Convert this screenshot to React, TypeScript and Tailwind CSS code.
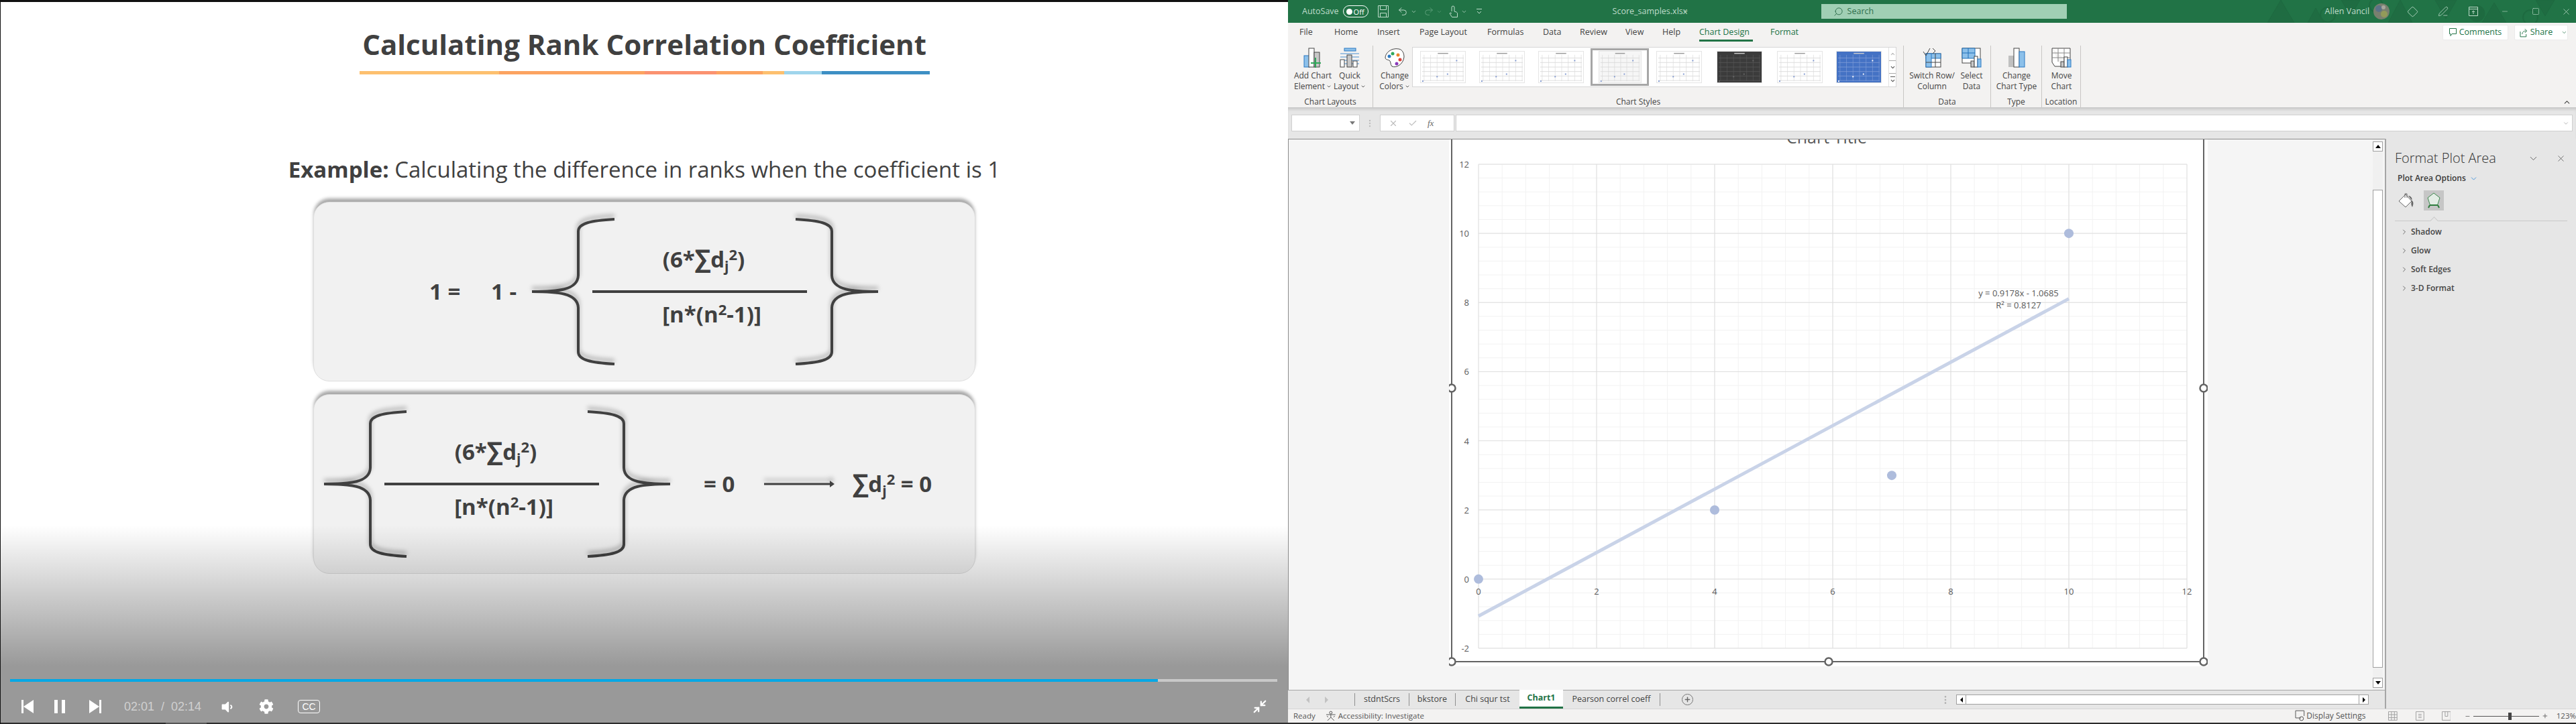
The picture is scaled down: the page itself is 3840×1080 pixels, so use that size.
import React from "react";
import { Check, ChevronDown, ChevronRight, ChevronUp, Diamond, Minimize2, Minus, MoreVertical, PenLine, Plus, Search, Square, Undo2, Redo2, X } from "lucide-react";
import { FaCog, FaVolumeDown } from "react-icons/fa";

const sans = "font-['Open_Sans',sans-serif]";

function Brace({ side, h }: { side: "left" | "right"; h: number }) {
    const m = h / 2;
    const d = `M2 ${m} C 40 ${m} 70 ${m - 2} 71 ${m - 24} L 71 22 C 71 10 90 6 125 4 M2 ${m} C 40 ${m} 70 ${m + 2} 71 ${m + 24} L 71 ${h - 22} C 71 ${h - 10} 90 ${h - 6} 125 ${h - 4}`;
    return (
        <svg width="126" height={h} viewBox={`0 0 126 ${h}`} className={`shrink-0 drop-shadow-[0_-5px_3px_rgba(0,0,0,0.3)] ${side === "right" ? "-scale-x-100" : ""}`}>
            <path d={d} fill="none" stroke="#404040" strokeWidth="4" />
        </svg>
    );
}

function Dj() {
    return (
        <>
            <span className="text-[37px] leading-none">∑</span>d<sub className="text-[21px]">j</sub><sup className="text-[22px]">2</sup>
        </>
    );
}

function Fraction() {
    return (
        <div className="relative z-10 flex flex-col w-[320px] shrink-0 ml-[-34px] mr-[-18px]">
            <div className="h-[96px] pt-[4px] pl-[12px] flex items-center justify-center text-[33px] font-bold">
                <span className="whitespace-nowrap">(6*<Dj />)</span>
            </div>
            <div className="h-[4px] bg-[#404040]" />
            <div className="h-[96px] pb-[32px] pl-[36px] flex items-center justify-center text-[33px] font-bold">
                <span className="whitespace-nowrap">[n*(n<sup className="text-[22px]">2</sup>-1)]</span>
            </div>
        </div>
    );
}

function Card({ children, pl }: { children: React.ReactNode; pl: string }) {
    return (
        <div className={`w-[987px] h-[268px] rounded-[24px] bg-[#f1f1f1] border border-[#dedede] shadow-[0_-6px_5px_-1px_rgba(0,0,0,0.35)] flex items-center text-[#404040] ${pl}`}>
            {children}
        </div>
    );
}

function VideoPane() {
    return (
        <div className={`relative w-[1920px] h-full bg-white border-l border-[#111] border-t-[3px] border-t-[#111] flex flex-col items-center overflow-hidden ${sans}`}>
            <h1 className="mt-[35px] text-[42px] leading-[56px] font-bold text-[#404040] whitespace-nowrap">Calculating Rank Correlation Coefficient</h1>
            <div className="mt-[12px] w-[850px] h-[5px] flex">
                <div className="w-[208px] bg-[#fdc06f]" />
                <div className="w-[217px] bg-[#fca361]" />
                <div className="w-[107px] bg-[#fb9270]" />
                <div className="w-[69px] bg-[#fca361]" />
                <div className="w-[32px] bg-[#fdc06f]" />
                <div className="w-[56px] bg-[#9fd5ec]" />
                <div className="flex-1 bg-[#3d8fc4]" />
            </div>
            <p className="mt-[119px] text-[33px] leading-[46px] text-[#404040] whitespace-nowrap">
                <b>Example:</b> Calculating the difference in ranks when the coefficient is 1
            </p>
            <div className="mt-[25px]">
                <Card pl="pl-[172px]">
                    <span className="text-[33px] font-bold w-[92px]">1 =</span>
                    <span className="text-[33px] font-bold w-[59px]">1 -</span>
                    <Brace side="left" h={224} />
                    <Fraction />
                    <Brace side="right" h={224} />
                </Card>
            </div>
            <div className="mt-[19px]">
                <Card pl="pl-[13px]">
                    <Brace side="left" h={224} />
                    <Fraction />
                    <Brace side="right" h={224} />
                    <span className="ml-[48px] text-[33px] font-bold w-[90px]">= 0</span>
                    <svg width="106" height="14" viewBox="0 0 106 14" className="shrink-0 drop-shadow-[0_-6px_3px_rgba(0,0,0,0.25)]">
                        <path d="M0 7h100" stroke="#404040" strokeWidth="3" />
                        <path d="M98 2l7 5-7 5z" fill="#404040" />
                    </svg>
                    <span className="ml-[26px] text-[33px] font-bold whitespace-nowrap"><Dj /> = 0</span>
                </Card>
            </div>

            <div className="absolute left-0 right-0 top-[780px] bottom-0 flex flex-col">
                <div className="h-[210px] bg-gradient-to-b from-transparent to-black/40" />
                <div className="flex-1 bg-black/40 flex flex-col">
                    <div className="mt-[20px] mx-[14px] w-[1889px] h-[4px] flex bg-[#c9c9c9]">
                        <div className="w-[1711px] bg-[#00a8e6]" />
                    </div>
                    <div className="mt-[26px] h-[22px] flex items-center pl-[31px] text-white">
                        <svg width="18" height="20" viewBox="0 0 18 20" className="shrink-0"><path d="M0 0h3v20H0zM3 10L18 0v20z" fill="white" /></svg>
                        <div className="ml-[31px] w-[5px] h-[20px] bg-white" />
                        <div className="ml-[6px] w-[5px] h-[20px] bg-white" />
                        <svg width="18" height="20" viewBox="0 0 18 20" className="ml-[36px] shrink-0"><path d="M15 0h3v20h-3zM15 10L0 0v20z" fill="white" /></svg>
                        <span className="ml-[34px] w-[112px] font-['Liberation_Sans',sans-serif] text-[18px] text-[#d0d0d0] whitespace-pre">02:01  /  02:14</span>
                        <FaVolumeDown className="ml-[31px] text-[21px]" />
                        <FaCog className="ml-[37px] text-[22px]" />
                        <span className="ml-[36px] w-[33px] h-[20px] border border-white rounded-[4px] flex items-center justify-center text-[14px] font-['Liberation_Sans',sans-serif] leading-none">CC</span>
                        <Minimize2 className="ml-auto mr-[31px]" size={22} strokeWidth={2.5} />
                    </div>
                </div>
                <div className="h-[2px] bg-[#2c2c2c] flex shrink-0"><div className="ml-[246px] w-[61px] bg-[#555]" /></div>
            </div>
        </div>
    );
}

function TitleBar() {
    const muted = "text-[#bfdccb]";
    return (
        <div className={`relative h-[34px] bg-[#217346] flex items-center text-[12px] overflow-hidden ${muted}`}>
            <svg className="absolute right-0 top-0" width="460" height="34" viewBox="0 0 460 34">
                <g fill="#1e6a40" stroke="#1e6a40">
                    <path d="M20 0l20 34H0zM60 34l12-22 12 22zM110 0l14 24 14-24zM180 34l18-34 18 34zM250 0l16 28 16-28zM320 34l18-30 18 30zM400 0l14 24 14-24z" fill="#1f6c42" />
                    <circle cx="90" cy="22" r="11" fill="none" strokeWidth="2" />
                    <circle cx="162" cy="8" r="10" fill="none" strokeWidth="2" />
                    <circle cx="312" cy="20" r="12" />
                    <circle cx="392" cy="26" r="11" fill="none" strokeWidth="2" />
                </g>
            </svg>
            <span className="ml-[21px] text-[12.5px]">AutoSave</span>
            <div className="ml-[6px] w-[38px] h-[18px] border border-white rounded-full flex items-center pl-[4px] gap-[2px] text-white">
                <div className="w-[9px] h-[9px] rounded-full bg-white" />
                <span className="text-[11px] leading-none">Off</span>
            </div>
            <svg width="16" height="18" viewBox="0 0 16 18" fill="none" stroke="currentColor" className="ml-[14px]"><path d="M.5.5h15v17H.5zM3.500 .5v6h9v-6M3.500 17.500v-6h9v6" /></svg>
            <Undo2 size={16} strokeWidth={1.5} className="ml-[13px]" />
            <ChevronDown size={9} className="ml-[4px]" />
            <Redo2 size={16} strokeWidth={1.5} className="ml-[10px] text-[#5a9e78]" />
            <ChevronDown size={9} className="ml-[3px] text-[#5a9e78]" />
            <svg width="13" height="18" viewBox="0 0 13 18" fill="none" stroke="currentColor" className="ml-[10px]"><path d="M4 9V3a2 2 0 014 0v6l3 1c1 .5 1.500 1 1.500 2v5.500h-8L1 12l1-1 2 1" /></svg>
            <ChevronDown size={9} className="ml-[5px]" />
            <svg width="8" height="8" viewBox="0 0 8 8" fill="none" stroke="currentColor" className="ml-[14px]"><path d="M0 .5h8M1 4l3 3 3-3" /></svg>
            <span className="ml-[195px] w-[100px] text-[12.5px] whitespace-nowrap">Score_samples.xlsx</span>
            <ChevronDown size={11} className="ml-[3px]" />
            <div className="relative ml-[197px] w-[366px] h-[22px] bg-[#a0cfb4] flex items-center text-[#2f6e4c]">
                <Search size={15} strokeWidth={1.5} className="ml-[18px] -scale-x-100" />
                <span className="ml-[6px] text-[12.5px]">Search</span>
            </div>
            <span className="relative ml-[385px] w-[72px] text-[12.5px] whitespace-nowrap">Allen Vancil</span>
            <svg width="24" height="24" viewBox="0 0 24 24" className="relative shrink-0">
                <circle cx="12" cy="12" r="12" fill="#79806f" />
                <circle cx="8" cy="8" r="5" fill="#5d7287" />
                <circle cx="16" cy="16" r="5" fill="#939a59" />
                <circle cx="15" cy="6" r="3" fill="#a6a79c" />
            </svg>
            <Diamond size={17} strokeWidth={1.2} className="relative ml-[26px]" />
            <PenLine size={16} strokeWidth={1.2} className="relative ml-[29px]" />
            <svg width="14" height="14" viewBox="0 0 14 14" fill="none" stroke="currentColor" className="relative ml-[30px]"><path d="M.5.5h13v13H.5zM.5 3.500h13M7 11V6M5 8l2-2 2 2" /></svg>
            <Minus size={12} strokeWidth={1.2} className="relative ml-[34px]" />
            <Square size={12} strokeWidth={1.2} className="relative ml-[34px]" />
            <X size={15} strokeWidth={1.2} className="relative ml-[32px]" />
        </div>
    );
}

function RibbonTabs() {
    const tab = "text-[12.5px] leading-[28px] whitespace-nowrap";
    return (
        <div className="h-[28px] flex items-start pl-[17px] text-[#444] relative">
            <span className={`w-[52px] ${tab}`}>File</span>
            <span className={`w-[64px] ${tab}`}>Home</span>
            <span className={`w-[63px] ${tab}`}>Insert</span>
            <span className={`w-[101px] ${tab}`}>Page Layout</span>
            <span className={`w-[83px] ${tab}`}>Formulas</span>
            <span className={`w-[55px] ${tab}`}>Data</span>
            <span className={`w-[68px] ${tab}`}>Review</span>
            <span className={`w-[55px] ${tab}`}>View</span>
            <span className={`w-[55px] ${tab}`}>Help</span>
            <span className={`w-[106px] ${tab} text-[#217346]`}>
                <span className="inline-block border-b-[3px] border-[#217346] h-[28px] w-[80px]">Chart Design</span>
            </span>
            <span className={`${tab} text-[#217346]`}>Format</span>
            <div className="ml-auto mr-[12px] mt-[3px] flex gap-[9px] text-[#217346]">
                <div className="w-[98px] h-[23px] bg-white rounded-[2px] border border-[#ebebeb] flex items-center justify-center gap-[4px] text-[12.5px]">
                    <svg width="11" height="13" viewBox="0 0 11 13" fill="none" stroke="currentColor"><path d="M.5.5h10v8H4l-2 3v-3H.5z" /></svg>
                    Comments
                </div>
                <div className="w-[80px] h-[23px] bg-white rounded-[2px] border border-[#ebebeb] flex items-center pl-[7px] gap-[4px] text-[12.5px]">
                    <svg width="12" height="14" viewBox="0 0 12 14" fill="none" stroke="currentColor"><path d="M1 5v8h9V9M4 9c0-4 3-5 6-5M8 1l3 3-3 3" /></svg>
                    Share
                    <ChevronDown size={9} className="ml-[9px]" />
                </div>
            </div>
        </div>
    );
}

function RibbonBtn({ w, icon, one, two, caret }: { w: string; icon: React.ReactNode; one: string; two: string; caret?: boolean }) {
    return (
        <div className={`${w} shrink-0 flex flex-col items-center text-[12px] leading-[16px] text-[#444] whitespace-nowrap`}>
            <div className="h-[31px] flex items-end justify-center mt-[8px]">{icon}</div>
            <span className="mt-[4px]">{one}</span>
            <span className="flex items-center">
                {two}
                {caret && <ChevronDown size={8} strokeWidth={2.5} className="ml-[2px]" />}
            </span>
        </div>
    );
}

function Thumb({ variant = "white", w = "w-[68px]", ml }: { variant?: "white" | "dark" | "blue" | "soft"; w?: string; ml?: string }) {
    const bg = variant === "dark" ? "#3b3b3b" : variant === "blue" ? "#4472c4" : variant === "soft" ? "#f6f6f6" : "#ffffff";
    const grid = variant === "dark" ? "#555555" : variant === "blue" ? "#7d9bd6" : "#d9d9d9";
    const dot = variant === "blue" ? "#ffffff" : variant === "dark" ? "#666" : "#7f97cf";
    const ys = [10, 17, 24, 31, 38, 45];
    const xs = [5, 15, 25, 35, 45, 55, 65];
    return (
        <svg viewBox="0 0 68 48" preserveAspectRatio="none" className={`h-[48px] ${w} ${ml ?? ""} shrink-0 border border-[#e5e5e5]`}>
            <rect width="68" height="48" fill={bg} />
            <rect x="26" y="2" width="16" height="1.500" fill={variant === "dark" || variant === "blue" ? "#ccc" : "#999"} />
            {ys.map((y) => <path key={y} d={`M2 ${y}H66`} stroke={grid} strokeWidth="0.9" />)}
            {xs.map((x) => <path key={x} d={`M${x} 5V46`} stroke={grid} strokeWidth="0.7" />)}
            <rect x="2" y="45" width="2" height="2" fill={dot} />
            <rect x="24" y="38" width="2" height="2" fill={dot} />
            <rect x="40" y="34" width="2" height="2" fill={dot} />
            <rect x="54" y="13" width="2" height="2" fill={dot} />
        </svg>
    );
}

function GroupLabel({ children }: { children: string }) {
    return <div className="mt-auto text-center text-[12px] leading-[16px] text-[#444]">{children}</div>;
}

const blue = "#8cc0ea";
const ink = "#444444";

function Ribbon() {
    return (
        <div className="h-[98px] flex items-stretch">
            <div className="w-[127px] flex flex-col border-r border-[#c8c6c4] mt-[6px]">
                <div className="flex pl-[5px] -mt-[6px]">
                    <RibbonBtn w="w-[64px]" one="Add Chart" two="Element" caret icon={
                        <svg width="30" height="30" viewBox="0 0 30 30"><rect x="2" y="12" width="8" height="17" fill={blue} stroke="#2b79c2" /><rect x="9" y="1" width="8" height="28" fill="#fff" stroke={ink} /><rect x="17" y="7" width="8" height="22" fill="#c8c8c8" stroke={ink} /><path d="M12 23h15M19 15v15" stroke="#2fa85a" strokeWidth="2" /></svg>
                    } />
                    <RibbonBtn w="w-[46px]" one="Quick" two="Layout" caret icon={
                        <svg width="30" height="30" viewBox="0 0 30 30"><rect x="7" y="1" width="17" height="4" fill={blue} stroke="#2b79c2" /><path d="M1 9h28M1 14h28M1 19h28M1 24h28" stroke="#4a90d0" /><rect x="1" y="18" width="6" height="11" fill="#fff" stroke={ink} /><rect x="11" y="11" width="7" height="18" fill="#c8c8c8" stroke={ink} /><rect x="20" y="20" width="6" height="9" fill="#fff" stroke={ink} /></svg>
                    } />
                </div>
                <GroupLabel>Chart Layouts</GroupLabel>
            </div>
            <div className="w-[791px] flex flex-col border-r border-[#c8c6c4] mt-[6px]">
                <div className="flex -mt-[6px] pl-[7px]">
                    <RibbonBtn w="w-[50px]" one="Change" two="Colors" caret icon={
                        <svg width="30" height="30" viewBox="0 0 30 30"><path d="M21 2C10 0 1 8 1 15c0 3 4 3 6 4 3 2 1 6 4 9 6 3 17-3 18-14C29 9 27 3 21 2z" fill="#fff" stroke={ink} /><circle cx="12" cy="9" r="2.500" fill="#2fa85a" /><circle cx="7" cy="13" r="2.500" fill="#2b79c2" /><circle cx="20" cy="11" r="2.500" fill="#e8862e" /><circle cx="23" cy="18" r="2.500" fill="#d8443c" /><circle cx="18" cy="24" r="2.500" fill="#8a3ab9" /></svg>
                    } />
                    <div className="ml-[1px] mt-[8px] w-[722px] h-[60px] bg-white border border-[#d6d6d6] flex items-center pl-[11px]">
                        <Thumb />
                        <Thumb ml="ml-[20px]" />
                        <Thumb ml="ml-[20px]" />
                        <div className="ml-[10px] w-[87px] h-[56px] border-[3px] border-[#a6a6a6] flex items-center justify-center shrink-0"><Thumb w="w-[64px]" variant="soft" /></div>
                        <Thumb ml="ml-[11px]" />
                        <Thumb ml="ml-[22px]" variant="dark" />
                        <Thumb ml="ml-[22px]" />
                        <Thumb ml="ml-[20px]" variant="blue" />
                        <div className="ml-[10px] w-[15px] h-full flex flex-col text-[#555] border-l border-[#e1e1e1]">
                            <div className="h-[20px] flex items-center justify-center text-[#bbb] border-b border-[#aaa]"><ChevronUp size={9} strokeWidth={3} /></div>
                            <div className="h-[19px] flex items-center justify-center border-b border-[#aaa]"><ChevronDown size={9} strokeWidth={3} /></div>
                            <div className="flex-1 flex flex-col items-center justify-center"><div className="w-[7px] h-px bg-[#555] mb-[1px]" /><ChevronDown size={9} strokeWidth={3} /></div>
                        </div>
                    </div>
                </div>
                <GroupLabel>Chart Styles</GroupLabel>
            </div>
            <div className="w-[130px] flex flex-col border-r border-[#c8c6c4] mt-[6px]">
                <div className="flex -mt-[6px]">
                    <RibbonBtn w="w-[84px]" one="Switch Row/" two="Column" icon={
                        <svg width="30" height="30" viewBox="0 0 30 30"><rect x="6" y="9" width="22" height="20" fill="#fff" stroke={ink} /><rect x="6" y="9" width="22" height="7" fill={blue} stroke="#2b79c2" /><rect x="6" y="9" width="8" height="20" fill={blue} stroke="#2b79c2" /><path d="M6 22h22M20 9v20" stroke={ink} /><path d="M2 6l4 6 6-11M16 1l4 4-4 4" stroke={ink} fill="none" /></svg>
                    } />
                    <RibbonBtn w="w-[34px]" one="Select" two="Data" icon={
                        <svg width="30" height="30" viewBox="0 0 30 30"><rect x="1" y="1" width="27" height="22" fill="#fff" stroke={ink} /><path d="M1 1h19v15H1z" fill={blue} stroke="#1f6fb8" /><path d="M10 1v15M1 8h19" stroke="#1f6fb8" /><rect x="14" y="20" width="5" height="9" fill="#c8c8c8" stroke={ink} /><rect x="19" y="13" width="5" height="16" fill="#fff" stroke={ink} /><rect x="24" y="17" width="5" height="12" fill={blue} stroke="#2b79c2" /></svg>
                    } />
                </div>
                <GroupLabel>Data</GroupLabel>
            </div>
            <div className="w-[76px] flex flex-col border-r border-[#c8c6c4] mt-[6px]">
                <div className="flex -mt-[6px]">
                    <RibbonBtn w="w-[76px]" one="Change" two="Chart Type" icon={
                        <svg width="26" height="30" viewBox="0 0 26 30"><rect x="1" y="12" width="8" height="17" fill="#c0c0c0" /><rect x="9" y="1" width="8" height="28" fill="#fff" stroke={ink} /><rect x="17" y="6" width="8" height="23" fill={blue} stroke="#2b79c2" /></svg>
                    } />
                </div>
                <GroupLabel>Type</GroupLabel>
            </div>
            <div className="w-[58px] flex flex-col border-r border-[#c8c6c4] mt-[6px]">
                <div className="flex -mt-[6px]">
                    <RibbonBtn w="w-[58px]" one="Move" two="Chart" icon={
                        <svg width="30" height="30" viewBox="0 0 30 30"><path d="M1 1h27v20h-4M1 1v21l4 6h9" fill="#fff" stroke={ink} /><path d="M1 8h27M1 15h27M10 1v20M19 1v20" stroke="#888" /><rect x="14" y="21" width="5" height="8" fill="#c8c8c8" stroke={ink} /><rect x="19" y="14" width="5" height="15" fill="#fff" stroke={ink} /><rect x="24" y="18" width="5" height="11" fill={blue} stroke="#2b79c2" /></svg>
                    } />
                </div>
                <GroupLabel>Location</GroupLabel>
            </div>
            <div className="flex-1 flex justify-end items-end pr-[7px]"><ChevronUp size={13} className="text-[#444] mb-[1px]" /></div>
        </div>
    );
}

function FormulaBar() {
    return (
        <div className="h-[47px] bg-[#e6e6e6] flex items-start pt-[11px] pl-[5px] text-[#8a8a8a] shadow-[inset_0_5px_4px_-2px_rgba(0,0,0,0.14)]">
            <div className="w-[102px] h-[25px] bg-white border border-[#d0d0d0] flex items-center justify-end pr-[6px]"><div className="w-0 h-0 border-x-[4px] border-x-transparent border-t-[5px] border-t-[#777]" /></div>
            <div className="w-[30px] h-[25px] flex items-center justify-center"><MoreVertical size={14} className="text-[#bbb]" /></div>
            <div className="w-[111px] h-[25px] bg-white border border-[#d0d0d0] flex items-center pl-[12px] gap-[15px] text-[#bdbdbd]">
                <X size={14} />
                <Check size={14} />
                <span className="font-['Liberation_Serif',serif] italic text-[13px] text-[#666]">fx</span>
            </div>
            <div className="ml-[2px] w-[1665px] h-[25px] bg-white border border-[#d0d0d0] flex items-center justify-end pr-[4px]"><ChevronDown size={10} className="text-[#aaa]" /></div>
        </div>
    );
}

function ChartSheet() {
    const X0 = 44;
    const Y0 = 37;
    const ux = 88;
    const uy = 51.57;
    const px = (v: number) => X0 + v * ux;
    const py = (v: number) => Y0 + (12 - v) * uy;
    const vMinor = Array.from({ length: 31 }, (_, i) => i * 0.4);
    const hMinor = Array.from({ length: 36 }, (_, i) => -2 + i * 0.4);
    const xTicks = [0, 2, 4, 6, 8, 10, 12];
    const yTicks = [12, 10, 8, 6, 4, 2, 0, -2];
    const handles = [[4, 371], [1125, 371], [4, 779], [566, 779], [1125, 779]];
    return (
        <svg width="1131" height="786" viewBox="0 0 1131 786" className="shrink-0 block font-['Open_Sans',sans-serif]">
            <rect width="1131" height="786" fill="#fff" />
            <text x="563" y="6" textAnchor="middle" fontSize="25" fill="#595959">Chart Title</text>
            {vMinor.map((v) => <path key={v} d={`M${px(v)} ${Y0}V${py(-2)}`} stroke="#f2f2f2" strokeWidth="1" />)}
            {hMinor.map((v) => <path key={v} d={`M${X0} ${py(v)}H${px(12)}`} stroke="#f2f2f2" strokeWidth="1" />)}
            {xTicks.map((v) => <path key={v} d={`M${px(v)} ${Y0}V${py(-2)}`} stroke="#dedede" strokeWidth="1" />)}
            {yTicks.map((v) => <path key={v} d={`M${X0} ${py(v)}H${px(12)}`} stroke="#dedede" strokeWidth="1" />)}
            <path d={`M${px(0)} ${py(-1.0685)}L${px(10)} ${py(8.11)}`} stroke="#c9d3e8" strokeWidth="5" />
            {[[0, 0], [4, 2], [7, 3], [10, 10]].map(([a, b]) => <circle key={a} cx={px(a)} cy={py(b)} r="7" fill="#aebcdc" />)}
            {yTicks.map((v) => <text key={v} x="30" y={py(v) + 5} textAnchor="end" fontSize="13" fill="#595959">{v}</text>)}
            {xTicks.map((v) => <text key={v} x={px(v)} y={py(0) + 23} textAnchor="middle" fontSize="13" fill="#595959">{v}</text>)}
            <text x="849" y="234" textAnchor="middle" fontSize="13" fill="#595959">y = 0.9178x - 1.0685</text>
            <text x="849" y="252" textAnchor="middle" fontSize="13" fill="#595959">R² = 0.8127</text>
            <path d="M4 0V779H1125V0" fill="none" stroke="#636363" strokeWidth="2" />
            {handles.map(([x, y]) => <circle key={`${x}-${y}`} cx={x} cy={y} r="5.500" fill="#fff" stroke="#636363" strokeWidth="2.500" />)}
        </svg>
    );
}

function VScroll() {
    const btn = "h-[15px] bg-white border border-[#a0a0a0] flex items-center justify-center shrink-0";
    return (
        <div className="w-[15px] h-full pt-[3px] pb-[3px] flex flex-col bg-[#f0f0f0] shrink-0">
            <div className={btn}><div className="w-0 h-0 border-x-[4px] border-x-transparent border-b-[5px] border-b-black" /></div>
            <div className="mt-[57px] h-[714px] bg-white border border-[#a0a0a0]" />
            <div className={`mt-[15px] ${btn}`}><div className="w-0 h-0 border-x-[4px] border-x-transparent border-t-[5px] border-t-black" /></div>
        </div>
    );
}

function SheetTabs() {
    const t = "h-[19px] flex items-center justify-center border-r border-[#8f8f8f] text-[12.5px] text-[#444] whitespace-nowrap";
    return (
        <div className="h-[28px] bg-[#e6e6e6] flex items-center border-t border-[#a6a6a6]">
            <div className="w-[100px] h-[19px] flex items-center border-r border-[#8f8f8f] pl-[27px] gap-[23px] text-[#c2c2c2]">
                <div className="w-0 h-0 border-y-[5px] border-y-transparent border-r-[5px] border-r-[#c2c2c2]" />
                <div className="w-0 h-0 border-y-[5px] border-y-transparent border-l-[5px] border-l-[#c2c2c2]" />
            </div>
            <div className={`w-[81px] ${t}`}>stdntScrs</div>
            <div className={`w-[69px] ${t}`}>bkstore</div>
            <div className={`w-[95px] ${t} border-r-0`}>Chi squr tst</div>
            <div className="w-[65px] h-[28px] -mt-[1px] bg-white border-b-[3px] border-[#217346] flex items-center justify-center text-[12.5px] font-bold text-[#217346]">Chart1</div>
            <div className={`w-[145px] ${t}`}>Pearson correl coeff</div>
            <div className="ml-[32px] w-[17px] h-[17px] rounded-full border border-[#777] flex items-center justify-center text-[#666]"><Plus size={11} strokeWidth={3} /></div>
            <MoreVertical size={16} className="ml-[368px] text-[#b0b0b0]" />
            <div className="ml-[8px] w-[615px] h-[15px] bg-white border border-[#a0a0a0] flex justify-between">
                <div className="w-[14px] border-r border-[#a0a0a0] flex items-center justify-center"><div className="w-0 h-0 border-y-[4px] border-y-transparent border-r-[4px] border-r-black" /></div>
                <div className="w-[14px] border-l border-[#a0a0a0] flex items-center justify-center"><div className="w-0 h-0 border-y-[4px] border-y-transparent border-l-[4px] border-l-black" /></div>
            </div>
        </div>
    );
}

function TaskPane() {
    const items = ["Shadow", "Glow", "Soft Edges", "3-D Format"];
    return (
        <div className="w-[285px] bg-[#e6e6e6] border-l-2 border-[#a6a6a6] pl-[13px] text-[#444] shrink-0">
            <div className="h-[46px] pt-[12px] flex items-center">
                <span className="text-[20px] leading-[28px] font-light text-[#333] whitespace-nowrap w-[198px]">Format Plot Area</span>
                <ChevronDown size={17} strokeWidth={1} className="text-[#333]" />
                <X size={15} strokeWidth={1} className="ml-[25px] text-[#333]" />
            </div>
            <div className="mt-[3px] flex items-center pl-[4px] text-[12px] font-semibold leading-[20px] text-[#3a3a3a]">
                Plot Area Options
                <ChevronDown size={13} strokeWidth={1.5} className="ml-[5px] text-[#2b88d8]" />
            </div>
            <div className="mt-[8px] flex items-center pl-[5px]">
                <svg width="24" height="24" viewBox="0 0 24 24" className="shrink-0">
                    <path d="M1 13L11 3l9 10-9 9z" fill="#fff" stroke="#666" />
                    <path d="M20 13c2-5-2-8-5-8l7 9c1 3 0 5-1 8-2-3-2-6-1-9z" fill="#666" />
                    <path d="M10 8V2h3v6" fill="none" stroke="#666" />
                </svg>
                <div className="ml-[14px] w-[30px] h-[30px] bg-[#c6c6c6] flex items-center justify-center">
                    <svg width="22" height="26" viewBox="0 0 22 26">
                        <path d="M11 2l9 7-3.500 11h-11L2 9z" fill="#e3ede5" stroke="#3f8a50" />
                        <path d="M5 20h12M5 20l-2 4M17 20l2 4" stroke="#2e7d3e" strokeWidth="2" fill="none" />
                    </svg>
                </div>
            </div>
            <div className="relative mt-[15px] w-[257px] h-px bg-[#c8c8c8]">
                <div className="absolute left-[54px] -top-[4px] w-[9px] h-[9px] rotate-45 border-l border-t border-[#c8c8c8] bg-[#e6e6e6]" />
            </div>
            <div className="mt-[2px] pl-[8px] flex flex-col">
                {items.map((it) => (
                    <div key={it} className="h-[28px] flex items-center gap-[4px] text-[12px] font-semibold text-[#444]">
                        <ChevronRight size={12} strokeWidth={1.500} />
                        {it}
                    </div>
                ))}
            </div>
        </div>
    );
}

function StatusBar() {
    return (
        <div className="h-[21px] bg-[#f3f2f1] border-t border-[#d6d6d6] flex items-center text-[11.5px] text-[#555] pl-[8px] whitespace-nowrap">
            <span className="w-[49px]">Ready</span>
            <svg width="16" height="16" viewBox="0 0 16 16" fill="none" stroke="#555"><circle cx="8" cy="3" r="2" /><path d="M1 6h14M8 6v4M3 15l5-5 5 5M2 8l2 2M14 8l-2 2" /></svg>
            <span className="ml-[3px] w-[122px]">Accessibility: Investigate</span>
            <svg width="16" height="18" viewBox="0 0 16 18" fill="none" stroke="#555" className="ml-[1304px]"><path d="M9 12H1V1h13v8" /><circle cx="10" cy="13" r="3" /></svg>
            <span className="ml-[2px] w-[104px] text-[12px]">Display Settings</span>
            <svg width="14" height="14" viewBox="0 0 14 14" fill="none" stroke="#a0a0a0" className="ml-[20px]"><path d="M.5.5h13v13H.5zM.5 5h13M.5 9.500h13M5 .5v13M9.500 .5v13" /></svg>
            <svg width="13" height="14" viewBox="0 0 13 14" fill="none" stroke="#a0a0a0" className="ml-[27px]"><path d="M.5.5h12v13H.5zM4 4.500h5M4 7h5M4 9.500h5" /></svg>
            <svg width="14" height="14" viewBox="0 0 14 14" fill="none" stroke="#a0a0a0" className="ml-[26px]"><path d="M.5.500h13v13H.5zM5 .5v7h4V.500" /></svg>
            <Minus size={9} className="ml-[21px]" />
            <div className="ml-[4px] w-[100px] h-px bg-[#555] relative"><div className="absolute left-[52px] -top-[5px] w-[5px] h-[11px] bg-[#444]" /></div>
            <Plus size={10} className="ml-[4px]" />
            <span className="ml-[12px]">123%</span>
        </div>
    );
}

function ExcelPane() {
    return (
        <div className={`w-[1920px] h-full flex flex-col bg-[#f3f2f1] ${sans}`}>
            <TitleBar />
            <RibbonTabs />
            <Ribbon />
            <FormulaBar />
            <div className="h-[850px] flex">
                <div className="w-[1635px] flex flex-col shrink-0">
                    <div className="h-[822px] bg-[#f5f5f5] flex border-t border-l border-[#8c8c8c] pr-[3px] overflow-hidden">
                        <div className="w-[239px] shrink-0" />
                        <ChartSheet />
                        <div className="w-[246px] shrink-0" />
                        <VScroll />
                    </div>
                    <SheetTabs />
                </div>
                <TaskPane />
            </div>
            <StatusBar />
            <div className="h-[2px] bg-[#2c2c2c] shrink-0" />
        </div>
    );
}

export default function App() {
    return (
        <div className="w-[3840px] h-[1080px] flex overflow-hidden bg-black">
            <VideoPane />
            <ExcelPane />
        </div>
    );
}
